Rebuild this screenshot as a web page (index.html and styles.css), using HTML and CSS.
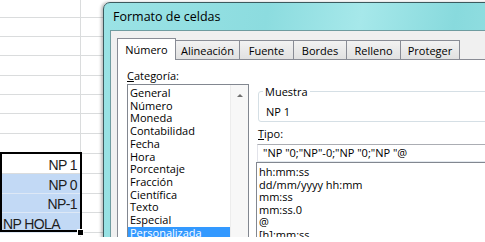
FILE: index.html
```html
<!DOCTYPE html>
<html lang="es">
<head>
    <meta charset="UTF-8">
    <meta name="viewport" content="width=device-width, initial-scale=1.0">
    <title>Formato de celdas</title>
    <link rel="stylesheet" href="styles.css">
</head>
<body>

<div class="screen">
    <div class="sheet">
        <div class="row h18"><div class="cell col-a"></div><div class="cell col-b"></div></div>
        <div class="row h19"><div class="cell col-a"></div><div class="cell col-b"></div></div>
        <div class="row h19"><div class="cell col-a"></div><div class="cell col-b"></div></div>
        <div class="row h20"><div class="cell col-a"></div><div class="cell col-b"></div></div>
        <div class="row h19"><div class="cell col-a"></div><div class="cell col-b"></div></div>
        <div class="row h19"><div class="cell col-a"></div><div class="cell col-b"></div></div>
        <div class="row h20"><div class="cell col-a"></div><div class="cell col-b"></div></div>
        <div class="row h20"><div class="cell col-a"></div><div class="cell col-b"></div></div>
        <div class="row h20"><div class="cell col-a active">NP 1</div><div class="cell col-b"></div></div>
        <div class="row h20"><div class="cell col-a sel">NP 0</div><div class="cell col-b"></div></div>
        <div class="row h19"><div class="cell col-a sel">NP-1</div><div class="cell col-b"></div></div>
        <div class="row h20"><div class="cell col-a sel text">NP HOLA</div><div class="cell col-b"></div></div>
        <div class="row h20"><div class="cell col-a"></div><div class="cell col-b"></div></div>
    </div>
    <div class="selection"></div>
    <div class="handle"></div>

    <div class="dialog">
        <div class="title">Formato de celdas</div>
        <div class="client">
            <div class="tabs">
                <div class="tab active w-num">Número</div>
                <div class="tab w-ali">Alineación</div>
                <div class="tab w-fue">Fuente</div>
                <div class="tab w-bor">Bordes</div>
                <div class="tab w-rel">Relleno</div>
                <div class="tab w-pro">Proteger</div>
            </div>
            <div class="page">
                <div class="left">
                    <div class="label"><u>C</u>ategoría:</div>
                    <div class="listbox">
                        <ul class="items">
                            <li>General</li>
                            <li>Número</li>
                            <li>Moneda</li>
                            <li>Contabilidad</li>
                            <li>Fecha</li>
                            <li>Hora</li>
                            <li>Porcentaje</li>
                            <li>Fracción</li>
                            <li>Científica</li>
                            <li>Texto</li>
                            <li>Especial</li>
                            <li class="picked">Personalizada</li>
                        </ul>
                        <div class="scroll"><span class="arrow"></span></div>
                    </div>
                </div>
                <div class="right">
                    <fieldset class="group">
                        <legend>Muestra</legend>
                        <div class="sample">NP 1</div>
                    </fieldset>
                    <div class="label tipo"><u>T</u>ipo:</div>
                    <div class="input">"NP "0;"NP"-0;"NP "0;"NP "@</div>
                    <ul class="formats">
                        <li>hh:mm:ss</li>
                        <li>dd/mm/yyyy hh:mm</li>
                        <li>mm:ss</li>
                        <li>mm:ss.0</li>
                        <li>@</li>
                        <li>[h]:mm:ss</li>
                    </ul>
                </div>
            </div>
        </div>
    </div>
</div>

</body>
</html>
```

FILE: styles.css
```css
body {
    margin: 0;
    background-color: #ffffff;
    font-family: 'Open Sans', 'Noto Sans', sans-serif;
}
.screen {
    position: relative;
    width: 485px;
    height: 237px;
    overflow: hidden;
    background-color: #ffffff;
}

/* hoja de calculo */
.sheet {
    display: flex;
    flex-direction: column;
}
.row {
    display: flex;
}
.h18 { height: 18px; }
.h19 { height: 19px; }
.h20 { height: 20px; }
.cell {
    box-sizing: border-box;
    border-bottom: 1px solid #dadcdd;
}
.col-a {
    width: 81px;
    border-right: 1px solid #dadcdd;
    display: flex;
    align-items: flex-end;
    justify-content: flex-end;
    padding: 0 3px 0 0;
    font-family: 'Liberation Sans', Arial, sans-serif;
    font-size: 14px;
    letter-spacing: -0.6px;
    color: #1e1e1e;
}
.col-b {
    flex: 1;
}
.active {
    background-color: #ffffff;
}
.sel {
    background-color: #c2d9f5;
    border-bottom-color: #dde8f6;
}
.text {
    justify-content: flex-start;
    padding-left: 3px;
}
.selection {
    position: absolute;
    left: 0;
    top: 152px;
    width: 82px;
    height: 80px;
    box-sizing: border-box;
    border: 2px solid #000000;
}
.handle {
    position: absolute;
    left: 77px;
    top: 229px;
    width: 5px;
    height: 5px;
    background-color: #000000;
    border: 1px solid #ffffff;
}

/* ventana */
.dialog {
    position: absolute;
    left: 103px;
    top: 2px;
    width: 420px;
    height: 260px;
    border: 1px solid #3c5a5e;
    border-radius: 7px 7px 0 0;
    padding-left: 6px;
    background: linear-gradient(100deg, #9be3e5 0%, #8cdcdf 35%, #a6e8ea 55%, #88dadd 75%, #9fe4e6 100%);
    box-shadow: -2px 0 3px rgba(0, 0, 0, 0.25);
}
.title {
    height: 27px;
    display: flex;
    align-items: center;
    padding-left: 3px;
    font-size: 12.5px;
    color: #000000;
}
.client {
    height: 100%;
    border: 1px solid #6f9ca0;
    background-color: #f0f0f0;
    padding: 7px 0 0 6px;
    font-size: 11px;
    color: #000000;
}
.tabs {
    display: flex;
    align-items: flex-end;
    height: 21px;
}
.tab {
    box-sizing: border-box;
    height: 19px;
    margin-left: -1px;
    border: 1px solid #898c95;
    border-bottom: none;
    background: linear-gradient(#f2f2f2, #e1e1e1);
    display: flex;
    justify-content: center;
    align-items: center;
    padding-top: 1px;
}
.tab.active {
    position: relative;
    z-index: 1;
    margin-left: 0;
    height: 22px;
    margin-bottom: -1px;
    background: #ffffff;
    padding-top: 0;
}
.w-num { width: 59px; }
.w-ali { width: 65px; }
.w-fue { width: 55px; }
.w-bor { width: 54px; }
.w-rel { width: 55px; }
.w-pro { width: 60px; }

.page {
    display: flex;
    height: 200px;
    border: 1px solid #898c95;
    border-right: none;
    background-color: #ffffff;
    padding-left: 9px;
}
.label {
    height: 16px;
    line-height: 15px;
}
.left {
    padding-top: 8px;
}
.listbox {
    display: flex;
    width: 122px;
    height: 170px;
    box-sizing: border-box;
    border: 1px solid #828790;
}
.items, .formats {
    list-style: none;
    margin: 0;
    padding: 2px 0 0 0;
    line-height: 12.7px;
}
.items {
    flex: 1;
}
.items li {
    padding-left: 2px;
}
.items .picked {
    background-color: #3399ff;
    color: #ffffff;
}
.scroll {
    width: 17px;
    border-left: 1px solid #ececec;
    background-color: #f7f7f7;
    display: flex;
    justify-content: center;
    padding-top: 9px;
}
.arrow {
    width: 0;
    height: 0;
    border-left: 3px solid transparent;
    border-right: 3px solid transparent;
    border-bottom: 3px solid #707070;
}

.right {
    flex: 1;
    margin-left: 7px;
    padding-top: 24px;
    display: flex;
    flex-direction: column;
}
.group {
    box-sizing: border-box;
    height: 38px;
    margin: 0 0 0 2px;
    padding: 0 0 0 7px;
    border: 1px solid #d5dfe5;
    border-radius: 3px;
}
.group legend {
    padding: 2px 2px 0 2px;
    margin-left: -3px;
    line-height: 12px;
}
.sample {
    margin-top: 8px;
    line-height: 12px;
}
.tipo {
    margin: 5px 0 0 2px;
    line-height: 14px;
    height: 14px;
}
.input {
    margin: 3px 0 0 1px;
    height: 18px;
    box-sizing: border-box;
    border: 1px solid #abadb3;
    border-bottom-color: #e3e9ef;
    border-left-color: #e2e3ea;
    padding-left: 5px;
    line-height: 16px;
    white-space: nowrap;
}
.formats {
    border: 1px solid #828790;
    border-right: none;
    padding: 3px 0 0 2px;
    line-height: 12.5px;
    flex: 1;
}
```
